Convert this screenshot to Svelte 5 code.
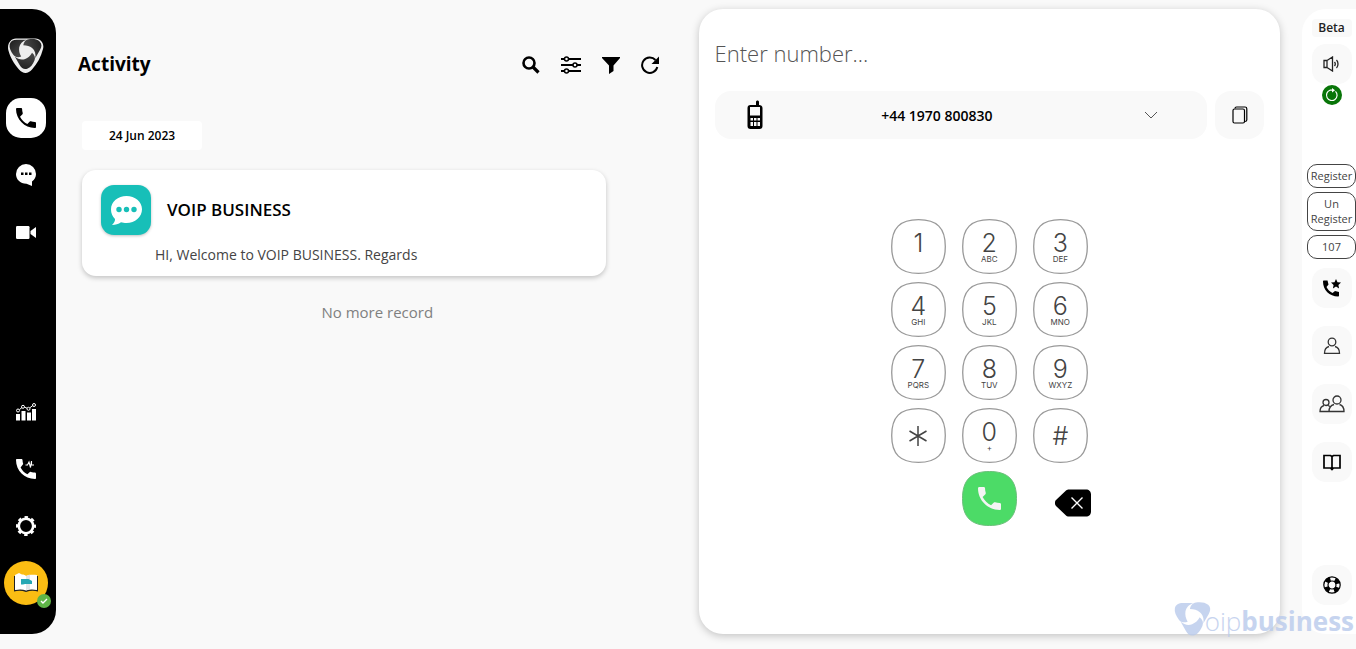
<script>
	let number = $state('');
	let callerId = $state('+44 1970 800830');

	const keys = [
		['1', ''],
		['2', 'ABC'],
		['3', 'DEF'],
		['4', 'GHI'],
		['5', 'JKL'],
		['6', 'MNO'],
		['7', 'PQRS'],
		['8', 'TUV'],
		['9', 'WXYZ'],
		['*', ''],
		['0', '+'],
		['#', '']
	];

	const petal = 'M5.3 16.8C2.8 13.500 1 9.800 1.700 6.300C2.600 3 5 1.700 8.800 1.700H18.500C14.500 3 11.800 5.800 11.200 9.500C10.800 12.500 11.300 15.300 13.200 18.600C10 19.800 7 19.200 5.300 16.800Z';
	const phone =
		'M6.62 10.79c1.44 2.83 3.76 5.14 6.59 6.59l2.2-2.2c.27-.27.67-.36 1.02-.24 1.12.37 2.33.57 3.57.57.55 0 1 .45 1 1V20c0 .55-.45 1-1 1C10.61 21 3 13.39 3 4c0-.55.45-1 1-1h3.5c.55 0 1 .45 1 1 0 1.25.2 2.45.57 3.57.11.35.03.74-.25 1.02l-2.2 2.2z';

	function press(digit) {
		number += digit;
	}
</script>

{#snippet petals()}
	<path d={petal} />
	<path d={petal} transform="rotate(120 17.5 13.5)" />
	<path d={petal} transform="rotate(240 17.5 13.5)" />
{/snippet}

{#snippet phoneIcon(size)}
	<svg width={size} height={size} viewBox="3 3 18 18" fill="currentColor"><path d={phone} /></svg>
{/snippet}

<div class="app">
	<aside class="sidebar">
		<nav class="group">
			<a class="nav-item" href="#home" aria-label="Home">
				<svg width="36" height="36" viewBox="0 0 36 36">
					<defs>
						<linearGradient id="metal" x1="0" y1="0" x2="1" y2="1">
							<stop offset="0" stop-color="#1c1c1c" />
							<stop offset="1" stop-color="#555" />
						</linearGradient>
					</defs>
					<path
						d="M8 .5H27.5C33 .5 36.500 6 35 11C33 19 29 26 24 31.500C20 36 15 36 11 31.500C6 26 2 19 .3 12C-1 6 2.500 .5 8 .5Z"
						fill="#eee"
					/>
					<g fill="url(#metal)">{@render petals()}</g>
				</svg>
			</a>
			<a class="nav-item active" href="#calls" aria-label="Calls">{@render phoneIcon(20)}</a>
			<a class="nav-item" href="#chat" aria-label="Chat">
				<svg width="20" height="22" viewBox="0 0 20 22">
					<path fill="#fff" d="M10 0a10 10 0 0 1 10 10c0 3-1.500 5.500-4 7.500V22l-5.500-2.200C4 19.500 0 15.500 0 10A10 10 0 0 1 10 0z" />
					<path d="M5 8.500h2.500V11H5zM9 8.500h2.500V11H9zM13 8.500h2.500V11H13z" />
				</svg>
			</a>
			<a class="nav-item" href="#video" aria-label="Video">
				<svg width="20" height="13" viewBox="0 0 20 13" fill="currentColor">
					<rect width="13.500" height="13" rx="1.200" />
					<path d="M14.500 5 20 1v11l-5.500-4z" />
				</svg>
			</a>
		</nav>
		<nav class="group">
			<a class="nav-item" href="#stats" aria-label="Statistics">
				<svg width="20" height="18" viewBox="0 0 20 18" fill="currentColor">
					<path d="M0 11h4v6.500H0zM5.500 8h4v9.500h-4zM11 9.500h4v8h-4zM16 6h4v11.500h-4z" />
					<path d="m3.500 6.500 2.500-2M8.500 4.200l2.500 1M13.800 4.800l3-2.300" stroke="#fff" />
					<g fill="none" stroke="#fff"><circle cx="2" cy="7.500" r="1.500" /><circle cx="7" cy="3.800" r="1.500" /><circle cx="12.500" cy="5.800" r="1.500" /><circle cx="18" cy="2" r="1.500" /></g>
				</svg>
			</a>
			<a class="nav-item" href="#call-log" aria-label="Call activity">
				<svg width="20" height="20" viewBox="0 0 20 20">
					<path fill="#fff" d="M1 0h4.500c.5 0 1 .5 1 1 0 1.500.3 2.500.7 4L4.600 8.500c1.500 3 3.700 5.300 6.800 6.800l2.700-2.500c1.300.5 2.400.7 4.400.7.8 0 1.500.5 1.500 1.200V19c0 .6-.4 1-1 1C8.500 20 0 11.500 0 1c0-.6.400-1 1-1z" />
					<path d="M9.500 6h2L13 3l1.500 5.500L15.500 2v4H18" fill="none" stroke="#fff" stroke-width="1.100" />
				</svg>
			</a>
			<a class="nav-item" href="#settings" aria-label="Settings">
				<svg width="20" height="20" viewBox="0 0 20 20" fill="none" stroke="#fff">
					<circle cx="10" cy="10" r="7.200" stroke-width="2.600" />
					<circle cx="10" cy="10" r="8.800" stroke-width="2.400" stroke-dasharray="3.460 3.452" stroke-dashoffset="1.730" />
				</svg>
			</a>
			<a class="profile" href="#profile" aria-label="Profile">
				<svg width="24" height="20" viewBox="0 0 24 20">
					<path fill="#222" d="M0 3h1.500v13.500c4-1 8-1 10.500 0 3-1 7-1 10.500 0V3H24v15.500c-4-1-8-1-12 .5-4-1.500-8-1.500-12-.5z" />
					<path fill="#fff" d="M1 2 5 0l3 1.500c2 0 3 .5 4 1.500 3-1.500 7-1.500 11-1v15c-4-.8-7.500-.8-11 .5-3-1.300-7-1.300-11-.5z" />
					<path fill="#e3e5e8" d="M12 3c1.500-.8 3-1.100 4-1.200V16c-1.500.3-3 .7-4 1.500z" />
					<path fill="#26a7b3" d="M7 6h7.500l3.500 2v3h-7l-2 .500H7z" />
				</svg>
				<span class="status">
					<svg width="8" height="6" viewBox="0 0 8 6"><path d="m1 3 2 2 4-4" fill="none" stroke="#fff" stroke-width="1.400" /></svg>
				</span>
			</a>
		</nav>
	</aside>

	<main class="activity">
		<header class="activity-head">
			<h1>Activity</h1>
			<div class="tools">
				<button aria-label="Search">
					<svg width="18" height="18" viewBox="0 0 18 18" fill="none" stroke="#000"><circle cx="7" cy="7" r="5.500" stroke-width="2.600" /><path d="m11 11 5.500 5.500" stroke-width="3.200" /></svg>
				</button>
				<button aria-label="Options">
					<svg width="20" height="18" viewBox="0 0 20 18" fill="#f9f9f9" stroke="#000" stroke-width="1.500">
						<path d="M0 3h20M0 9h20M0 15h20" stroke-width="2" />
						<circle cx="5.500" cy="3" r="2" /><circle cx="14" cy="9" r="2" /><circle cx="5.500" cy="15" r="2" />
					</svg>
				</button>
				<button aria-label="Filter">
					<svg width="18" height="18" viewBox="0 0 18 18"><path d="M0 1h18v1l-6.500 7.500V15L7 18V9.500L0 2z" /></svg>
				</button>
				<button aria-label="Refresh">
					<svg width="18" height="18" viewBox="0 0 18 18"><path d="M16.300 11A7.700 7.700 0 1 1 14.500 4" fill="none" stroke="#000" stroke-width="2" /><path d="M18 .5V8h-7.500z" /></svg>
				</button>
			</div>
		</header>

		<section class="records">
			<time class="date" datetime="2023-06-24">24 Jun 2023</time>
			<article class="card">
				<div class="sender">
					<span class="chat-icon">
						<svg width="31" height="29" viewBox="0 0 31 29">
							<path fill="#fff" d="M15.500 0C24 0 31 5.500 31 13.300S24 27 15.500 27c-2 0-4-.3-5.500-.8C7.500 28 4.500 29 1 29c2-2 3.200-4 3-6C1.500 20.500 0 17.500 0 13.500 0 5.500 7 0 15.500 0z" />
							<g fill="#17bfb8"><circle cx="8" cy="13.500" r="2.700" /><circle cx="15.500" cy="13.500" r="2.700" /><circle cx="23" cy="13.500" r="2.700" /></g>
						</svg>
					</span>
					<h2>VOIP BUSINESS</h2>
				</div>
				<p>HI, Welcome to VOIP BUSINESS. Regards</p>
			</article>
		</section>
		<p class="end">No more record</p>
	</main>

	<section class="dialer">
		<input class="number" type="tel" placeholder="Enter number..." aria-label="Number" bind:value={number} />
		<div class="caller">
			<label class="caller-id">
				<svg class="mobile" width="16" height="30" viewBox="0 0 16 30">
					<path d="M9 5V2c0-2 3-2 3 0v3c2 0 3.500 1 3.500 3v18c0 2-1 3-3 3h-9c-2 0-3-1-3-3V8c0-2 1-3 3-3z" />
					<path fill="#f9f9f9" d="M3 7h10v8.500H3zM3.500 18h2.500v2.500H3.500zM7 18h2.500v2.500H7zM10.500 18h2.500v2.500h-2.500zM3.500 22h2.500v4H3.500zM7 22h2.500v4H7zM10.500 22h2.500v4h-2.500z" />
				</svg>
				<select aria-label="Caller ID" bind:value={callerId}>
					<option>+44 1970 800830</option>
				</select>
				<svg class="chevron" width="14" height="8" viewBox="0 0 14 8"><path d="m1 1 6 6 6-6" fill="none" stroke="#555" /></svg>
			</label>
			<button class="copy" aria-label="Copy number">
				<svg width="16" height="18" viewBox="0 0 16 18" fill="none" stroke="#000" stroke-width="1.200">
					<rect x="1" y="3" width="11.500" height="14" rx="1.500" />
					<path d="M3 2.500C3 1.500 3.500 1 4.500 1H13c1 0 1.800.8 1.800 1.800V14c0 1-.8 1.500-2 1.500" />
				</svg>
			</button>
		</div>

		<div class="keypad">
			{#each keys as [digit, letters]}
				<button class="key" aria-label={digit} onclick={() => press(digit)}>
					<svg class="outline" viewBox="0 0 55 55"><path d="M27.500.700C46 .7 54.300 9 54.300 27.500S46 54.300 27.500 54.300.7 46 .7 27.500 9 .7 27.500.700z" /></svg>
					{#if digit === '*'}
						<svg class="star" width="18" height="20" viewBox="0 0 18 20"><path d="M9 0v20M.5 5l17 10M.5 15l17-10" /></svg>
					{:else}
						<span class="face">
							<span class="digit">{digit}</span>
							{#if digit !== '#'}
								<span class="letters">{letters}</span>
							{/if}
						</span>
					{/if}
				</button>
			{/each}
			<button class="key call" aria-label="Call">
				<svg class="outline" viewBox="0 0 55 55"><path d="M27.500.500C46 .5 54.500 9 54.500 27.500S46 54.500 27.500 54.500.5 46 .5 27.500 9 .5 27.500.500z" /></svg>
				{@render phoneIcon(23)}
			</button>
			<button class="erase" aria-label="Delete" onclick={() => (number = number.slice(0, -1))}>
				<svg width="36" height="28" viewBox="0 0 36 28">
					<path d="M14 .500H31c3 0 5 2 5 5v17c0 3-2 5-5 5H14c-1.500 0-2.500-.5-3.500-1.500L1 17c-1.500-1.500-1.500-4.500 0-6l9.500-9C11.500 1 12.500.5 14 .500z" />
					<path d="m16.500 8.500 11 11m0-11-11 11" stroke="#fff" stroke-width="1.400" />
				</svg>
			</button>
		</div>
	</section>

	<aside class="rail">
		<span class="beta">Beta</span>
		<button class="tile" aria-label="Sound">
			<svg width="17" height="16" viewBox="0 0 17 16" fill="none" stroke="#222" stroke-width="1.300">
				<path d="M1 4.500h3v7H1zM4 4.500 9.500 1v14L4 11.500M11.500 6c.8 1 .8 3 0 4M13.500 4c2 2 2 6 0 8" />
			</svg>
		</button>
		<button class="sync" aria-label="Reconnect">
			<svg width="14" height="14" viewBox="0 0 14 14"><path d="M10.500 3.400A5.300 5.300 0 1 1 5 2.200L7.500 2.200" fill="none" stroke="#fff" stroke-width="1.200" /><path fill="#fff" d="M7 0v4.500L10 2.300z" /></svg>
		</button>
		<div class="register">
			<button>Register</button>
			<button>Un Register</button>
			<button>107</button>
		</div>
		<div class="tiles">
			<button class="tile" aria-label="Favourites">
				<svg width="18" height="18" viewBox="0 0 18 18">
					<path d="M1 1.500h3.500l1 4L3.500 8c1.200 2.600 3.200 4.600 6 6l2.500-2 4 1v3.500c0 .6-.4 1-1 1C6.500 17.500 0 11 0 2.500c0-.6.4-1 1-1z" />
					<path d="m13 0 1.500 3.200 3.500.4-2.600 2.300.7 3.500L13 7.600 9.900 9.400l.7-3.500L8 3.600l3.500-.4z" />
				</svg>
			</button>
			<button class="tile" aria-label="Contact">
				<svg width="18" height="18" viewBox="0 0 18 18" fill="none" stroke="#333" stroke-width="1.300"><circle cx="9" cy="5" r="3.800" /><path d="M6 9.500c-3 .8-4.500 3-4.500 6.800h15c0-3.800-1.500-6-4.500-6.800" /></svg>
			</button>
			<button class="tile" aria-label="Team">
				<svg width="26" height="18" viewBox="0 0 26 18" fill="none" stroke="#333" stroke-width="1.300">
					<circle cx="7" cy="7.500" r="3" /><circle cx="18" cy="5" r="4" />
					<path d="M5 10.500c-2.500.7-4 2.500-4 6h8.500M9 10.500l2 1M15 9.500c-3 .8-5 3-5 7h15c0-4-1.500-6.200-4.500-7" />
				</svg>
			</button>
			<button class="tile" aria-label="Directory">
				<svg width="18" height="17" viewBox="0 0 18 17" fill="none" stroke="#000" stroke-width="1.700"><path d="M1 1.500h6.500L9 2.500l1.500-1H17v12.500h-6.500L9 15.500 7.500 14H1zM9 2.500V16" /></svg>
			</button>
		</div>
		<button class="tile help" aria-label="Help">
			<svg width="18" height="18" viewBox="0 0 18 18" fill="none" stroke="#000">
				<circle cx="9" cy="9" r="8.200" stroke-width="1.200" /><circle cx="9" cy="9" r="4" stroke-width="1.200" />
				<circle cx="9" cy="9" r="6" stroke-width="4.500" stroke-dasharray="4.700 4.725" stroke-dashoffset="-2.350" />
			</svg>
		</button>
	</aside>

	<div class="brand">
		<svg width="40" height="40" viewBox="0 0 36 36" fill="#b9caec">{@render petals()}</svg>
		<span class="thin">oip</span><span class="bold">business</span>
	</div>
</div>

<style>
	:global(body) {
		background: #f9f9f9;
	}

	.app {
		position: relative;
		box-sizing: border-box;
		min-height: 100vh;
		padding: 9px 0 15px;
		display: grid;
		grid-template-columns: 56px minmax(0, 21fr) minmax(0, 19fr) 76px;
		overflow: hidden;
		color: #000;
		font-family: 'Open Sans', 'Noto Sans', sans-serif;
	}

	h1,
	h2,
	p {
		margin: 0;
	}

	svg {
		display: block;
	}

	button {
		padding: 0;
		border: 0;
		background: none;
		color: inherit;
		font-family: inherit;
		cursor: pointer;
	}

	.sidebar {
		box-sizing: border-box;
		display: flex;
		flex-direction: column;
		justify-content: space-between;
		padding: 27px 4px 29px 0;
		background: #000;
		border-radius: 0 24px 24px 0;
	}

	.group {
		display: flex;
		flex-direction: column;
		align-items: center;
		gap: 17px;
	}

	.nav-item {
		display: grid;
		place-items: center;
		width: 40px;
		height: 40px;
		color: #fff;
		border-radius: 15px;
	}

	.nav-item.active {
		margin-top: 5px;
		background: #fff;
		color: #000;
	}

	.profile {
		position: relative;
		display: grid;
		place-items: center;
		width: 44px;
		height: 44px;
		margin-top: -2px;
		border-radius: 50%;
		background: #fbbd13;
	}

	.status {
		position: absolute;
		right: -3px;
		bottom: -3px;
		display: grid;
		place-items: center;
		width: 14px;
		height: 14px;
		border-radius: 50%;
		background: #5fb548;
	}

	.activity {
		padding: 40px 0 0;
	}

	.activity-head {
		display: flex;
		align-items: center;
		justify-content: space-between;
		padding: 0 40px 0 22px;
	}

	h1 {
		font-size: 19px;
		line-height: 30px;
		font-weight: 700;
	}

	.tools {
		display: flex;
		align-items: center;
		gap: 21px;
		padding-top: 2px;
	}

	.records {
		padding: 42px 93px 0 26px;
	}

	.date {
		display: block;
		width: 120px;
		font-size: 12px;
		line-height: 29px;
		font-weight: 600;
		text-align: center;
		background: #fff;
		border-radius: 4px;
	}

	.card {
		box-sizing: border-box;
		margin-top: 20px;
		padding: 15px 20px 10px 19px;
		background: #fff;
		border-radius: 14px;
		box-shadow: 0 2px 5px rgba(0, 0, 0, 0.22);
	}

	.sender {
		display: flex;
		align-items: center;
		gap: 16px;
	}

	.chat-icon {
		display: grid;
		place-items: center;
		width: 50px;
		height: 50px;
		background: #17bfb8;
		border-radius: 13px;
		box-shadow: 0 1px 3px rgba(0, 0, 0, 0.25);
	}

	h2 {
		font-size: 17px;
		line-height: 24px;
		font-weight: 600;
	}

	.card p {
		margin: 9px 0 0 54px;
		font-size: 14px;
		line-height: 22px;
		color: #444;
	}

	.end {
		margin-top: 24px;
		font-size: 15px;
		line-height: 24px;
		text-align: center;
		color: #808080;
	}

	.dialer {
		box-sizing: border-box;
		padding: 24px 16px;
		background: #fff;
		border-radius: 24px;
		box-shadow: 0 2px 8px rgba(0, 0, 0, 0.22);
	}

	.number {
		box-sizing: border-box;
		display: block;
		width: 100%;
		height: 40px;
		margin-bottom: 18px;
		padding: 0;
		border: 0;
		outline: 0;
		background: none;
		font-family: inherit;
		font-size: 22px;
		font-weight: 300;
	}

	.number::placeholder {
		color: #555;
	}

	.caller {
		display: grid;
		grid-template-columns: 1fr 49px;
		gap: 8px;
		height: 48px;
	}

	.caller-id {
		display: grid;
		align-items: center;
		background: #f9f9f9;
		border-radius: 16px;
	}

	.caller-id > * {
		grid-area: 1 / 1;
	}

	.caller-id svg {
		pointer-events: none;
	}

	.mobile {
		margin-left: 32px;
	}

	.chevron {
		justify-self: end;
		margin-right: 49px;
	}

	select {
		appearance: none;
		width: 100%;
		height: 48px;
		padding: 0 48px 0 0;
		border: 0;
		background: none;
		font-family: inherit;
		font-size: 14px;
		font-weight: 600;
		color: #000;
		text-align-last: center;
	}

	.copy {
		display: grid;
		place-items: center;
		background: #f9f9f9;
		border-radius: 16px;
	}

	.keypad {
		display: grid;
		grid-template-columns: repeat(3, 55px);
		grid-auto-rows: 55px;
		justify-content: center;
		gap: 8px 16px;
		margin-top: 80px;
	}

	.key {
		display: grid;
		place-items: center;
		color: #444;
		font-family: Inter, sans-serif;
	}

	.key > :global(*) {
		grid-area: 1 / 1;
	}

	.outline {
		width: 55px;
		height: 55px;
		fill: none;
		stroke: #999;
		stroke-width: 1.3;
	}

	.star {
		stroke: #444;
		stroke-width: 1.5;
	}

	.face {
		display: flex;
		flex-direction: column;
	}

	.digit {
		font-size: 25px;
		line-height: 24px;
		font-weight: 300;
	}

	.letters {
		height: 8px;
		font-size: 8px;
		line-height: 8px;
	}

	.call {
		grid-column: 2;
		color: #f4f4f4;
	}

	.call .outline {
		fill: #4cdb67;
		stroke: #6bbf7a;
		stroke-width: 1;
	}

	.erase {
		margin: 8px 0 0 22px;
	}

	.rail {
		box-sizing: border-box;
		display: flex;
		flex-direction: column;
		align-items: center;
		margin-left: 22px;
		padding: 10px 0 29px 5px;
		background: #fff;
		border-radius: 24px 0 0 24px;
	}

	.beta {
		width: 40px;
		margin-bottom: 7px;
		font-size: 12px;
		line-height: 18px;
		font-weight: 600;
		text-align: center;
		color: #222;
		background: #f9f9f9;
		border-radius: 4px;
	}

	.tile {
		display: grid;
		place-items: center;
		width: 40px;
		height: 40px;
		background: #f9f9f9;
		border-radius: 14px;
	}

	.sync {
		display: grid;
		place-items: center;
		width: 20px;
		height: 20px;
		margin-top: 1px;
		background: #087508;
		border-radius: 50%;
	}

	.register {
		display: grid;
		gap: 4px;
		width: 49px;
		margin: 59px 0 9px;
	}

	.register button {
		padding: 3px 0 4px;
		border: 1px solid #444;
		border-radius: 10px;
		font-size: 11px;
		line-height: 15px;
		color: #444;
	}

	.tiles {
		display: grid;
		gap: 18px;
	}

	.help {
		margin-top: auto;
	}

	/* watermark over the bottom corner */
	.brand {
		position: absolute;
		right: 2px;
		bottom: 8px;
		display: flex;
		align-items: center;
		font-size: 26px;
		line-height: 30px;
		color: #b9caec;
		opacity: 0.8;
		pointer-events: none;
	}

	.brand svg {
		margin-right: -8px;
	}

	.thin {
		font-weight: 300;
	}

	.bold {
		font-weight: 700;
	}
</style>
